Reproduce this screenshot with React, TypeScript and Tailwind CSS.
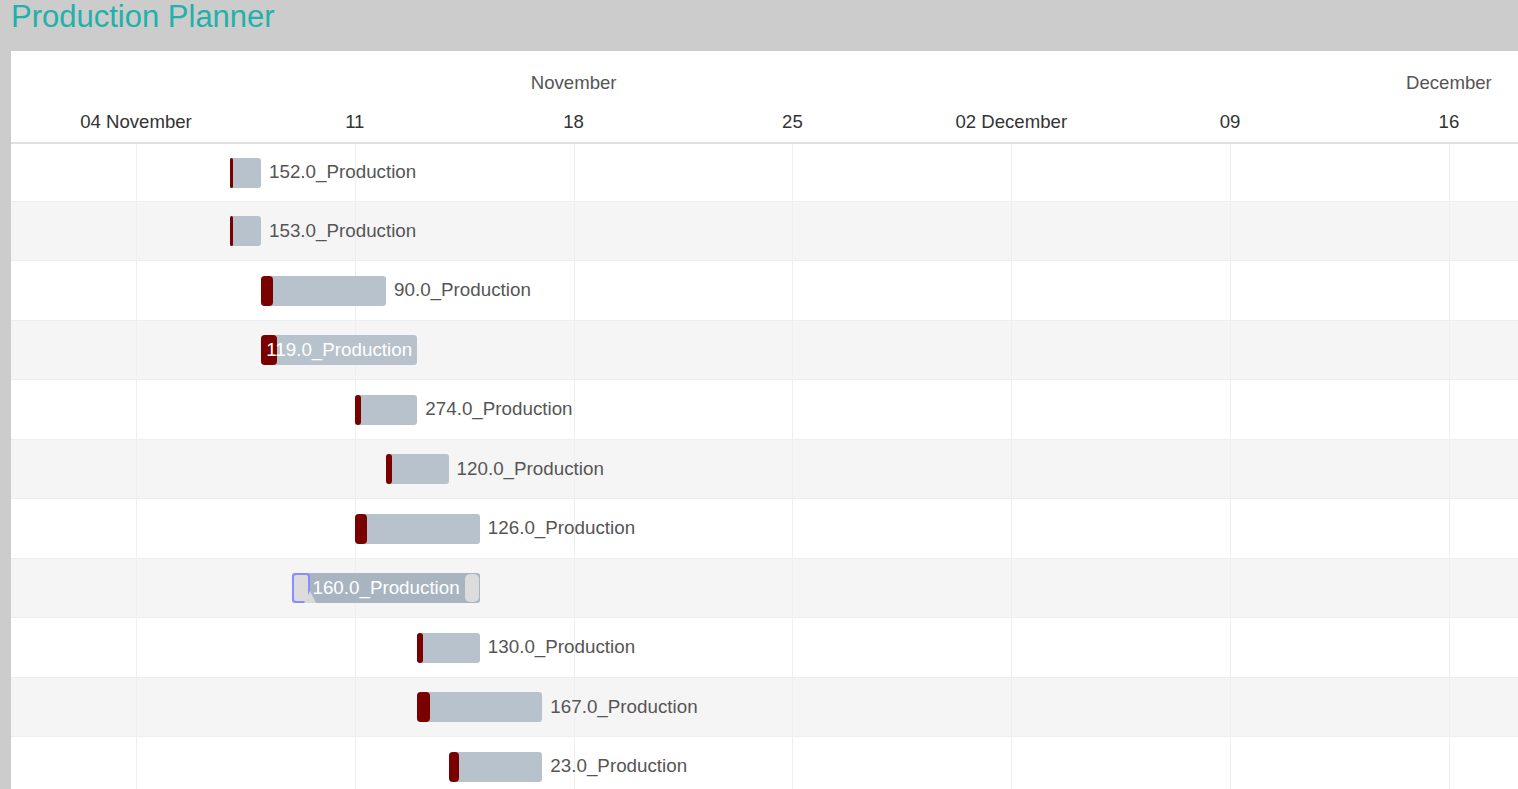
import React from "react";

type Task = {
  name: string;
  start: number; // days after 04 November
  days: number;
  progress: number; // px of dark progress strip
  selected?: boolean;
};

const DAY = 31.26;
const ORIGIN = 125; // x of 04 November inside the chart
const LABEL_W = 9.3; // approx px per char of a bar label

const xOf = (d: number) => ORIGIN + d * DAY;

const ticks = [
  { d: 0, label: "04 November" },
  { d: 7, label: "11" },
  { d: 14, label: "18" },
  { d: 21, label: "25" },
  { d: 28, label: "02 December" },
  { d: 35, label: "09" },
  { d: 42, label: "16" },
];

const months = [
  { d: 14, label: "November" },
  { d: 42, label: "December" },
];

const tasks: Task[] = [
  { name: "152.0_Production", start: 3, days: 1, progress: 3 },
  { name: "153.0_Production", start: 3, days: 1, progress: 3 },
  { name: "90.0_Production", start: 4, days: 4, progress: 12 },
  { name: "119.0_Production", start: 4, days: 5, progress: 16 },
  { name: "274.0_Production", start: 7, days: 2, progress: 6 },
  { name: "120.0_Production", start: 8, days: 2, progress: 6 },
  { name: "126.0_Production", start: 7, days: 4, progress: 12 },
  { name: "160.0_Production", start: 5, days: 6, progress: 0, selected: true },
  { name: "130.0_Production", start: 9, days: 2, progress: 6 },
  { name: "167.0_Production", start: 9, days: 4, progress: 13 },
  { name: "23.0_Production", start: 10, days: 3, progress: 10 },
];

function Bar({ task }: { task: Task }) {
  const left = xOf(task.start);
  const width = task.days * DAY;
  const inside = task.name.length * LABEL_W < width;

  return (
    <div
      className="absolute top-1/2 -translate-y-1/2 h-[30px]"
      style={{ left, width }}
    >
      <div
        className={
          task.selected
            ? "relative h-full w-full rounded-[3px] bg-[#a9b4c1]"
            : "relative h-full w-full rounded-[3px] bg-[#b8c2cc]"
        }
      >
        {task.progress > 0 && (
          <div
            className="absolute left-0 top-0 h-full rounded-[4px] bg-[#7a0000]"
            style={{ width: task.progress }}
          />
        )}
        {task.selected && (
          <>
            <div className="absolute left-0 top-0 h-full w-[18px] rounded-[4px] border-2 border-[#8a8cff] bg-[#dcdcdc]" />
            <div className="absolute left-[12px] bottom-0 w-0 h-0 border-l-[6px] border-r-[6px] border-b-[12px] border-l-transparent border-r-transparent border-b-[#d9d9d9]" />
            <div className="absolute right-[1px] top-[1px] h-[28px] w-[14px] rounded-[5px] bg-[#dcdcdc]" />
          </>
        )}
        {inside && (
          <div className="absolute inset-0 flex items-center justify-center text-white text-[18.8px] leading-none whitespace-nowrap">
            {task.name}
          </div>
        )}
      </div>
      {!inside && (
        <div className="absolute left-full top-0 h-full ml-[8px] flex items-center text-[#555555] text-[18.8px] leading-none whitespace-nowrap">
          {task.name}
        </div>
      )}
    </div>
  );
}

export default function App() {
  return (
    <div
      className="min-h-screen bg-[#cccccc] overflow-hidden"
      style={{ fontFamily: '"Liberation Sans", Arial, sans-serif' }}
    >
      <div className="h-[51px] pl-[11px]">
        <h1 className="text-[31px] leading-[33px] text-[#20b2aa]">
          Production Planner
        </h1>
      </div>

      <div className="ml-[11px] bg-white">
        {/* timeline header */}
        <div className="relative h-[93px] border-b-2 border-[#e0e0e0]">
          {months.map((m) => (
            <div
              key={m.label}
              className="absolute top-[21px] -translate-x-1/2 text-[18.6px] leading-[22px] text-[#555555] whitespace-nowrap"
              style={{ left: xOf(m.d) }}
            >
              {m.label}
            </div>
          ))}
          {ticks.map((t) => (
            <div
              key={t.label}
              className="absolute top-[60px] -translate-x-1/2 text-[18.6px] leading-[22px] text-[#333333] whitespace-nowrap"
              style={{ left: xOf(t.d) }}
            >
              {t.label}
            </div>
          ))}
        </div>

        {/* rows, grid lines, bars */}
        <div className="relative">
          {tasks.map((task, i) => (
            <div
              key={task.name}
              className={
                (i === 0 ? "h-[57.5px] " : "h-[59.5px] ") +
                (i % 2 === 1 ? "bg-[#f5f5f5] " : "bg-white ") +
                "border-b border-[#ebeff2]"
              }
            />
          ))}
          {ticks.map((t) => (
            <div
              key={t.label}
              className="absolute top-0 bottom-0 w-px bg-[#efefef]"
              style={{ left: xOf(t.d) }}
            />
          ))}
          <div className="absolute inset-0 flex flex-col">
            {tasks.map((task, i) => (
              <div
                key={task.name}
                className={(i === 0 ? "h-[57.5px] " : "h-[59.5px] ") + "relative"}
              >
                <Bar task={task} />
              </div>
            ))}
          </div>
        </div>
      </div>
    </div>
  );
}
